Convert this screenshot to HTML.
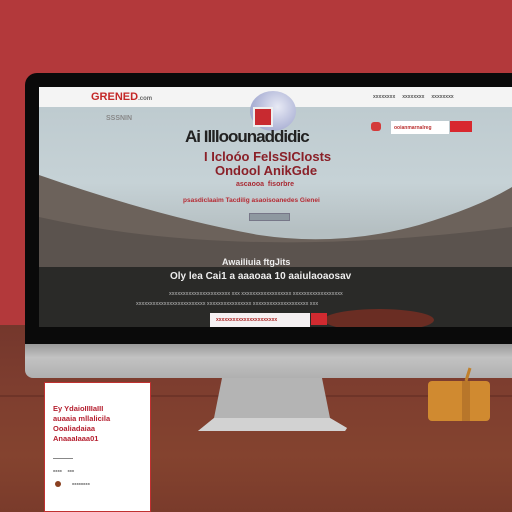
<!DOCTYPE html>
<html><head><style>
*{margin:0;padding:0;box-sizing:border-box}
body{width:512px;height:512px;overflow:hidden;position:relative;font-family:"Liberation Sans",sans-serif;background:#b3393b}
.abs{position:absolute}
#desk{left:0;top:325px;width:512px;height:187px;background:linear-gradient(180deg,#74372c 0%,#7d3d2f 30%,#84432f 70%,#7a3b2b 100%)}
#bezel{left:25px;top:73px;width:500px;height:272px;background:#0a0a0a;border-radius:12px 0 0 0}
#chin{left:25px;top:344px;width:500px;height:34px;background:linear-gradient(180deg,#9a9a9a 0%,#c2c2c2 40%,#b0b0b0 100%);border-radius:0 0 0 8px}
#screen{left:39px;top:87px;width:473px;height:240px;overflow:hidden;background:linear-gradient(180deg,#bcc9ce 0%,#c6d2d6 40%,#b5bfc2 60%)}
#nav{left:0;top:0;width:100%;height:20px;background:#f4f4f4}
#band{left:0;top:180px;width:100%;height:60px;background:#2a2a28}
.t{position:absolute;white-space:nowrap;font-weight:bold}
</style></head><body>
<div class="abs" id="desk"></div>
<div class="abs" style="left:0;top:395px;width:512px;height:2px;background:#5e2a22;opacity:.5"></div>
<div class="abs" id="bezel"></div>
<div class="abs" id="screen">
 <svg class="abs" style="left:0;top:0" width="473" height="240">
  <path d="M0 88 Q120 130 220 148 Q300 160 380 138 Q440 120 473 100 L473 180 L0 180Z" fill="#6c625b"/>
  <path d="M0 130 Q200 175 473 140 L473 180 L0 180Z" fill="#5b534e"/>
 </svg>
 <div class="abs" id="nav"></div>
 <div class="t" style="left:52px;top:4px;font-size:11px;color:#c42828">GRENED<span style="font-size:6px;color:#666">.com</span></div>
 <div class="t" style="left:334px;top:7px;font-size:5px;color:#555">xxxxxxxx &nbsp; &nbsp; xxxxxxxx &nbsp; &nbsp; xxxxxxxx</div>
 <div class="abs" style="left:211px;top:4px;width:46px;height:40px;border-radius:50%;background:radial-gradient(circle at 60% 40%,#e8eaf5,#8c94c4)"></div>
 <div class="abs" style="left:214px;top:20px;width:20px;height:20px;background:#c82a30;border:2px solid #eee"></div>
 <div class="t" style="left:67px;top:28px;font-size:7px;color:#888">SSSNIN</div>
 <div class="t" style="left:146px;top:40px;font-size:17px;color:#222;letter-spacing:-1px">Ai Illloounaddidic</div>
 <div class="t" style="left:165px;top:62px;font-size:13px;color:#8a2028">I Icloóo FelsSICIosts</div>
 <div class="t" style="left:176px;top:76px;font-size:13px;color:#8a2028">Ondool AnikGde</div>
 <div class="t" style="left:197px;top:94px;font-size:7px;color:#a82a33">ascaooa&nbsp; fisorbre</div>
 <div class="t" style="left:144px;top:110px;font-size:6.5px;color:#b52a33">psasdiclaaim Tacdilig asaoisoanedes Gienei</div>
 <div class="abs" style="left:210px;top:126px;width:41px;height:8px;background:#8e98a0;border:1px solid #778"></div>
 <div class="abs" style="left:332px;top:35px;width:10px;height:9px;background:#d43a3a;border-radius:3px"></div>
 <div class="abs" style="left:352px;top:34px;width:58px;height:13px;background:#fff"></div>
 <div class="t" style="left:355px;top:38px;font-size:5px;color:#b33">ooianmarnalreg</div>
 <div class="abs" style="left:411px;top:34px;width:22px;height:11px;background:#d8282e"></div>
 <div class="abs" id="band"></div>
 <div class="t" style="left:183px;top:170px;font-size:9px;color:#eee">Awailiuia ftgJits</div>
 <div class="t" style="left:131px;top:184px;font-size:10px;color:#eee">Oly lea Cai1 a aaaoaa 10 aaiulaoaosav</div>
 <div class="t" style="left:130px;top:204px;font-size:5px;color:#999">xxxxxxxxxxxxxxxxxxxxxx xxx xxxxxxxxxxxxxxxxxx xxxxxxxxxxxxxxxxxx</div>
 <div class="t" style="left:97px;top:214px;font-size:5px;color:#999">xxxxxxxxxxxxxxxxxxxxxxxxx xxxxxxxxxxxxxxxx xxxxxxxxxxxxxxxxxxxx xxx</div>
 <div class="abs" style="left:285px;top:222px;width:110px;height:22px;border-radius:50%;background:#7a2e22;opacity:.8"></div>
 <div class="abs" style="left:171px;top:226px;width:100px;height:14px;background:#f5f0f2"></div>
 <div class="t" style="left:177px;top:230px;font-size:5px;color:#a22">xxxxxxxxxxxxxxxxxxxxxx</div>
 <div class="abs" style="left:272px;top:226px;width:16px;height:12px;background:#d02a30"></div>
</div>
<div class="abs" id="chin"></div>
<svg class="abs" style="left:0;top:0" width="512" height="512">
 <path d="M222 378 L322 378 L330 418 L347 428 L345 431 L198 431 L214 418Z" fill="#b4b4b4"/>
 <path d="M214 418 L330 418 L347 428 L345 431 L198 431Z" fill="#d2d2d2"/>
 <rect x="428" y="381" width="62" height="40" rx="4" fill="#d08a30"/>
 <rect x="462" y="381" width="8" height="40" fill="#b8762a"/>
 <path d="M466 381 L470 368" stroke="#c0802c" stroke-width="3"/>
</svg>
<div class="abs" style="left:44px;top:382px;width:107px;height:130px;background:#fff;border:1px solid #c03030"></div>
<div class="t" style="left:53px;top:404px;font-size:7.5px;line-height:10px;color:#b52030">Ey YdaioIIIIaIII<br>auaaia mllalicila<br>Ooaliadaiaa<br>AnaaaIaaa01</div>
<div class="abs" style="left:53px;top:458px;width:20px;height:1px;background:#888"></div>
<div class="t" style="left:53px;top:468px;font-size:4px;color:#555">xxxx &nbsp; &nbsp; xxx</div>
<div class="abs" style="left:55px;top:481px;width:6px;height:6px;border-radius:50%;background:#8a4020"></div>
<div class="t" style="left:72px;top:481px;font-size:4px;color:#555">xxxxxxxx</div>
</body></html>
